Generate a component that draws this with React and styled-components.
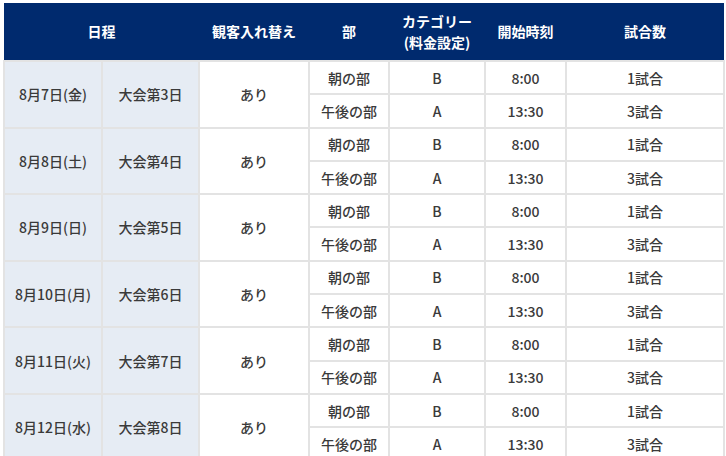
import React from 'react';
import styled, { createGlobalStyle } from 'styled-components';

const Global = createGlobalStyle`
  html, body {
    margin: 0;
    padding: 0;
    background: #fff;
  }
  body {
    padding: 3px 3px 0 3px;
    font-family: "Noto Sans CJK JP", "Noto Sans", sans-serif;
  }
`;

const Table = styled.table`
  width: 720px;
  border-collapse: collapse;
  table-layout: fixed;
  font-size: 14px;
  font-weight: 500;
  color: #3a3a3a;
`;

const Head = styled.th`
  background: #002a6e;
  color: #fff;
  font-weight: 700;
  height: 57px;
  padding: 0;
  line-height: 1.45;
  text-align: center;
  vertical-align: middle;
`;

const Cell = styled.td`
  border: 2px solid #e3e3e3;
  background: ${(p) => (p.$shade ? '#e6ecf4' : '#fff')};
  text-align: center;
  vertical-align: middle;
  padding: 0;
  line-height: 1;
`;

const Row = styled.tr`
  height: 33.3px;
`;

const days = [
  ['8月7日(金)', '大会第3日'],
  ['8月8日(土)', '大会第4日'],
  ['8月9日(日)', '大会第5日'],
  ['8月10日(月)', '大会第6日'],
  ['8月11日(火)', '大会第7日'],
  ['8月12日(水)', '大会第8日'],
];

const widths = [98, 97, 110, 80, 96, 81, 158];

export default function App() {
  return (
    <>
      <Global />
      <Table>
        <colgroup>
          {widths.map((w, i) => (
            <col key={i} style={{ width: w }} />
          ))}
        </colgroup>
        <thead>
          <tr>
            <Head colSpan={2}>日程</Head>
            <Head>観客入れ替え</Head>
            <Head>部</Head>
            <Head>
              カテゴリー
              <br />
              (料金設定)
            </Head>
            <Head>開始時刻</Head>
            <Head>試合数</Head>
          </tr>
        </thead>
        <tbody>
          {days.map(([date, day]) => (
            <React.Fragment key={date}>
              <Row>
                <Cell $shade rowSpan={2}>{date}</Cell>
                <Cell $shade rowSpan={2}>{day}</Cell>
                <Cell rowSpan={2}>あり</Cell>
                <Cell>朝の部</Cell>
                <Cell>B</Cell>
                <Cell>8:00</Cell>
                <Cell>1試合</Cell>
              </Row>
              <Row>
                <Cell>午後の部</Cell>
                <Cell>A</Cell>
                <Cell>13:30</Cell>
                <Cell>3試合</Cell>
              </Row>
            </React.Fragment>
          ))}
        </tbody>
      </Table>
    </>
  );
}
